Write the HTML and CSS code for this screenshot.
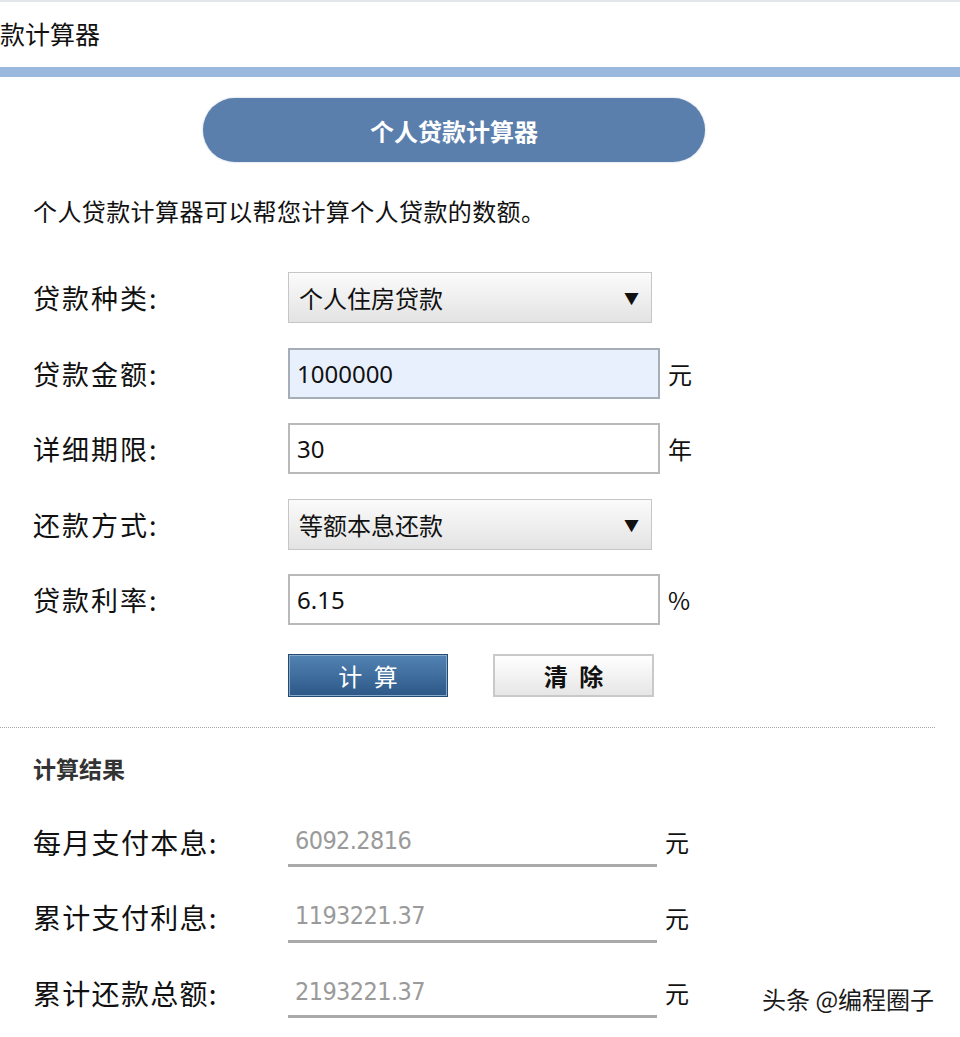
FILE: index.html
```html
<!DOCTYPE html>
<html lang="zh-CN">
<head>
<meta charset="utf-8">
<title>个人贷款计算器</title>
<link rel="stylesheet" href="styles.css">
</head>
<body>
<header class="topbar"><span class="page-title">款计算器</span></header>
<div class="bluebar"></div>
<main class="calc">
  <div class="banner">个人贷款计算器</div>
  <p class="intro">个人贷款计算器可以帮您计算个人贷款的数额。</p>
  <div class="fields">
    <div class="row">
      <span class="label">贷款种类:</span>
      <div class="select"><span>个人住房贷款</span><span class="arrow">▼</span></div>
    </div>
    <div class="row">
      <span class="label">贷款金额:</span>
      <input class="input filled" type="text" value="1000000">
      <span class="unit">元</span>
    </div>
    <div class="row">
      <span class="label">详细期限:</span>
      <input class="input" type="text" value="30">
      <span class="unit">年</span>
    </div>
    <div class="row">
      <span class="label">还款方式:</span>
      <div class="select"><span>等额本息还款</span><span class="arrow">▼</span></div>
    </div>
    <div class="row">
      <span class="label">贷款利率:</span>
      <input class="input" type="text" value="6.15">
      <span class="unit">%</span>
    </div>
  </div>
  <div class="actions">
    <button class="btn btn-primary" type="button">计 算</button>
    <button class="btn btn-plain" type="button">清 除</button>
  </div>
  <hr class="divider">
  <h2 class="result-title">计算结果</h2>
  <div class="results">
    <div class="rrow">
      <span class="rlabel">每月支付本息:</span>
      <span class="rvalue">6092.2816</span>
      <span class="runit">元</span>
    </div>
    <div class="rrow">
      <span class="rlabel">累计支付利息:</span>
      <span class="rvalue">1193221.37</span>
      <span class="runit">元</span>
    </div>
    <div class="rrow">
      <span class="rlabel">累计还款总额:</span>
      <span class="rvalue">2193221.37</span>
      <span class="runit">元</span>
    </div>
  </div>
</main>
<div class="watermark">头条 @编程圈子</div>
</body>
</html>
```
FILE: styles.css
```css
html, body {
  margin: 0;
  padding: 0;
  background: #fff;
}
body {
  font-family: "Noto Sans CJK SC", "Noto Sans", sans-serif;
  color: #111;
  position: relative;
  width: 960px;
  min-height: 1037px;
  overflow: hidden;
}
.topbar {
  height: 65px;
  border-top: 2px solid #e3e6ea;
  display: flex;
  align-items: flex-start;
}
.page-title {
  font-size: 25px;
  line-height: 30px;
  margin-top: 16px;
  color: #111;
}
.bluebar {
  height: 10px;
  background: #9bb9de;
}
.calc {
  display: flex;
  flex-direction: column;
}
.banner {
  margin: 21px 0 0 203px;
  width: 502px;
  height: 64px;
  border-radius: 32px;
  background: #5b7fad;
  color: #fff;
  font-weight: bold;
  font-size: 24px;
  display: flex;
  align-items: center;
  justify-content: center;
  box-shadow: 0 0 2px rgba(60, 90, 130, 0.4);
}
.intro {
  margin: 31px 0 0 33px;
  font-size: 24px;
  line-height: 36px;
  letter-spacing: 0.4px;
}
.fields {
  margin-top: 43px;
  display: flex;
  flex-direction: column;
  gap: 24.5px;
}
.row {
  display: flex;
  align-items: center;
  height: 51px;
}
.label {
  width: 255px;
  padding-left: 33px;
  font-size: 27px;
  letter-spacing: 2px;
}
.select {
  box-sizing: border-box;
  width: 364px;
  height: 51px;
  border: 1px solid #c6c6c6;
  background: linear-gradient(#fbfbfb, #e3e3e3);
  display: flex;
  align-items: center;
  justify-content: space-between;
  padding: 0 12px 0 10px;
  font-size: 24px;
}
.arrow {
  font-size: 15px;
  color: #111;
}
.input {
  box-sizing: border-box;
  width: 372px;
  height: 51px;
  border: 2px solid #b9b9b9;
  background: #fff;
  padding: 0 7px;
  font-family: "Noto Sans", "Noto Sans CJK SC", sans-serif;
  font-size: 24px;
  color: #111;
  outline: none;
  margin: 0;
}
.input.filled {
  background: #e8f0fe;
  border-color: #a5adb6;
}
.unit {
  margin-left: 8px;
  font-size: 24px;
}
.actions {
  margin: 29px 0 0 288px;
  display: flex;
  gap: 45px;
}
.btn {
  box-sizing: border-box;
  height: 43px;
  font-family: "Noto Sans CJK SC", sans-serif;
  font-size: 24px;
  letter-spacing: 3px;
  padding: 0 0 0 3px;
  cursor: pointer;
}
.btn-primary {
  width: 160px;
  color: #fff;
  border: 1px solid #244a72;
  background: linear-gradient(#5383b3, #2c5887);
  box-shadow: inset 0 0 0 1px #86a9cc;
}
.btn-plain {
  width: 161px;
  color: #111;
  border: 2px solid #c9c9c9;
  background: linear-gradient(#ffffff, #e6e6e6);
  font-weight: bold;
}
.divider {
  margin: 30px 0 0 0;
  width: 935px;
  border: 0;
  border-top: 1px dotted #a8a8a8;
  height: 0;
}
.result-title {
  margin: 25px 0 0 33px;
  font-size: 23px;
  line-height: 30px;
  font-weight: bold;
  color: #333;
}
.results {
  margin-top: 33px;
  display: flex;
  flex-direction: column;
  gap: 24.5px;
}
.rrow {
  display: flex;
  align-items: center;
  height: 51px;
}
.rlabel {
  width: 255px;
  padding-left: 33px;
  font-size: 28px;
  letter-spacing: 1.3px;
  color: #111;
}
.rvalue {
  box-sizing: border-box;
  width: 369px;
  height: 51px;
  border-bottom: 3px solid #a9a9a9;
  padding: 0 7px;
  display: flex;
  align-items: center;
  font-family: "DejaVu Sans Condensed", "DejaVu Sans", sans-serif;
  font-size: 25px;
  letter-spacing: -0.6px;
  color: #9a9a9a;
}
.runit {
  margin-left: 8px;
  font-size: 24px;
}
.watermark {
  position: absolute;
  left: 762px;
  top: 981px;
  font-size: 24px;
  color: #1a1a1a;
  text-shadow: 0 0 2px #fff, 0 0 2px #fff;
}
```
